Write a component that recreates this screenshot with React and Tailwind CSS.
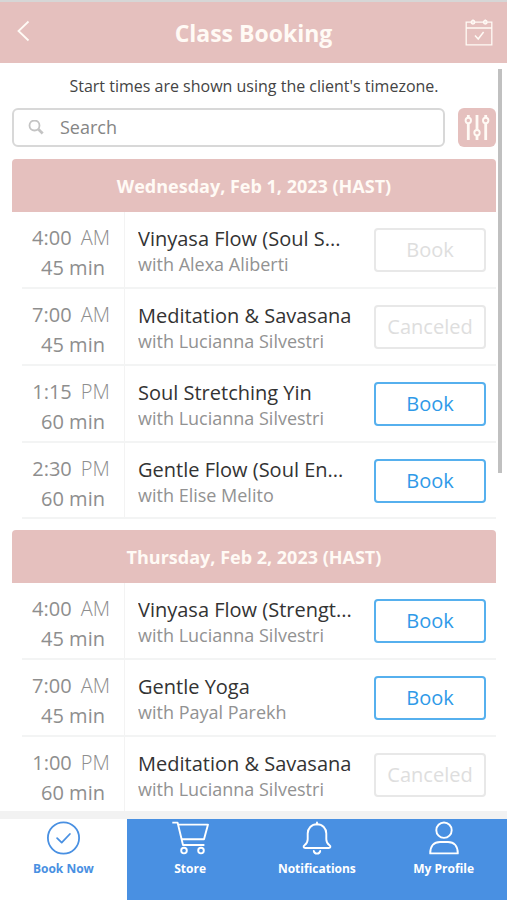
const days = [
  {
    label: 'Wednesday, Feb 1, 2023 (HAST)',
    classes: [
      { time: '4:00', half: 'AM', length: '45 min', title: 'Vinyasa Flow (Soul S...', teacher: 'Alexa Aliberti', action: 'Book', disabled: true },
      { time: '7:00', half: 'AM', length: '45 min', title: 'Meditation & Savasana', teacher: 'Lucianna Silvestri', action: 'Canceled', disabled: true },
      { time: '1:15', half: 'PM', length: '60 min', title: 'Soul Stretching Yin', teacher: 'Lucianna Silvestri', action: 'Book' },
      { time: '2:30', half: 'PM', length: '60 min', title: 'Gentle Flow (Soul En...', teacher: 'Elise Melito', action: 'Book' },
    ],
  },
  {
    label: 'Thursday, Feb 2, 2023 (HAST)',
    classes: [
      { time: '4:00', half: 'AM', length: '45 min', title: 'Vinyasa Flow (Strengt...', teacher: 'Lucianna Silvestri', action: 'Book' },
      { time: '7:00', half: 'AM', length: '45 min', title: 'Gentle Yoga', teacher: 'Payal Parekh', action: 'Book' },
      { time: '1:00', half: 'PM', length: '60 min', title: 'Meditation & Savasana', teacher: 'Lucianna Silvestri', action: 'Canceled', disabled: true },
    ],
  },
];

function BackIcon() {
  return (
    <svg className="h-6 w-4" viewBox="0 0 16 24" fill="none" stroke="currentColor" strokeWidth="1.8" aria-hidden="true">
      <path d="M12.5 2.5 2.5 12l10 9.5" />
    </svg>
  );
}

function CalendarIcon() {
  return (
    <svg className="h-7 w-7" viewBox="0 0 28 28" fill="none" stroke="currentColor" strokeWidth="1.3" aria-hidden="true">
      <path d="M6.2 3.2H1.2v22.6h25.6V3.2h-4.6M9.8 3.2h8.6M1.2 9h25.6" />
      <circle cx="8" cy="3.2" r="1.8" fill="currentColor" fillOpacity="0.7" />
      <circle cx="20.3" cy="3.2" r="1.8" fill="currentColor" fillOpacity="0.7" />
      <path d="M8 0.4v1.2M20.3 0.4v1.2" />
      <path d="m10 16.6 3.2 3.4 5.4-7" strokeWidth="1.5" />
    </svg>
  );
}

function SearchIcon() {
  return (
    <svg className="h-4 w-4" viewBox="0 0 16 16" fill="none" stroke="currentColor" aria-hidden="true">
      <circle cx="6.5" cy="5.5" r="5" strokeWidth="1.8" />
      <path d="m10.3 9.3 4.4 4.2" strokeWidth="2.8" />
    </svg>
  );
}

function SlidersIcon() {
  return (
    <svg className="h-7 w-7" viewBox="0 0 28 28" fill="none" stroke="currentColor" aria-hidden="true">
      <path d="M5.3 1v2.6M5.3 9.4V26M14 1v14.8M14 21.6V26M22.7 1v2.6M22.7 9.4V26" strokeWidth="2.8" />
      <circle cx="5.3" cy="6.5" r="2.7" strokeWidth="1.9" />
      <circle cx="14" cy="18.7" r="2.7" strokeWidth="1.9" />
      <circle cx="22.7" cy="6.5" r="2.7" strokeWidth="1.9" />
    </svg>
  );
}

function CheckCircleIcon() {
  return (
    <svg className="h-9 w-10" viewBox="0 0 40 36" fill="none" stroke="currentColor" strokeWidth="1.8" strokeLinecap="round" strokeLinejoin="round" aria-hidden="true">
      <circle cx="20.5" cy="19" r="15.6" />
      <path d="m14.1 19.2 4.6 4.4 8.2-8.6" />
    </svg>
  );
}

function CartIcon() {
  return (
    <svg className="h-9 w-10" viewBox="0 0 40 36" fill="none" stroke="currentColor" strokeWidth="1.9" strokeLinejoin="round" aria-hidden="true">
      <path d="M2.3 3.6H7.6L13 26H34.4" />
      <path d="M8.2 5.6H38L34 20.2H11.8" />
      <circle cx="14" cy="31.6" r="2.8" />
      <circle cx="31" cy="31.6" r="2.8" />
    </svg>
  );
}

function BellIcon() {
  return (
    <svg className="h-9 w-10" viewBox="0 -1 40 36" fill="none" stroke="currentColor" strokeWidth="1.9" strokeLinecap="round" strokeLinejoin="round" aria-hidden="true">
      <path d="M20 2.4v2" />
      <path d="M20 4.3c-5.6 0-9.3 4-9.3 9.3v5.6c0 2.8-1.2 4.6-3.2 6-1.5 1.1-1 2.8.8 2.8h23.4c1.8 0 2.3-1.7.8-2.8-2-1.4-3.2-3.2-3.2-6v-5.6c0-5.3-3.7-9.3-9.3-9.3Z" />
      <path d="M16.8 31c.3 1.7 1.6 2.6 3.2 2.6s2.9-.9 3.2-2.6" />
    </svg>
  );
}

function ProfileIcon() {
  return (
    <svg className="h-9 w-10" viewBox="0 -1 40 36" fill="none" stroke="currentColor" strokeWidth="1.9" strokeLinejoin="round" aria-hidden="true">
      <circle cx="20" cy="10.2" r="7.7" />
      <path d="M6.2 33.4C6.2 26 10 22 16 22h8c6 0 9.8 4 9.8 11.4Z" />
    </svg>
  );
}

const tabs = [
  { label: 'Book Now', Icon: CheckCircleIcon, active: true },
  { label: 'Store', Icon: CartIcon },
  { label: 'Notifications', Icon: BellIcon },
  { label: 'My Profile', Icon: ProfileIcon },
];

function ClassRow({ item }) {
  return (
    <li className="flex h-[77px] pl-[10px] last:h-[76px]">
      <div className="flex min-w-0 flex-1 border-b-2 border-[#f3f4f4]">
        <div className="flex w-[103px] shrink-0 flex-col items-center border-r border-[#f3f3f3] pt-[11px] text-xl leading-[30px] text-[#8e8e8e]">
          <p className="mr-1 flex gap-[9px]">
            <span>{item.time}</span>
            <span className="font-light">{item.half}</span>
          </p>
          <p>{item.length}</p>
        </div>
        <div className="min-w-0 flex-1 pt-[13px] pl-[13px]">
          <h3 className="truncate text-xl leading-[28px] text-[#333]">{item.title}</h3>
          <p className="truncate text-lg leading-[22px] text-[#929292]">with {item.teacher}</p>
        </div>
        <div className="shrink-0 pt-4 pr-[10px]">
          <button
            type="button"
            disabled={item.disabled}
            className="h-[44px] w-[112px] rounded border-2 border-[#56b0ee] text-xl text-[#2f9ae8] disabled:border-[#e8e8e8] disabled:text-[#dedede]"
          >
            {item.action}
          </button>
        </div>
      </div>
    </li>
  );
}

export default function App() {
  return (
    <div className="flex h-screen flex-col overflow-hidden bg-white font-['Open_Sans',sans-serif]">
      <header className="flex h-[63px] shrink-0 items-center justify-between border-t-2 border-[#d6d6d6] bg-[#e5c0be] px-[14px] text-[#fffaf5]">
        <button type="button" aria-label="Back" className="w-7 pb-1 pl-[2px]">
          <BackIcon />
        </button>
        <h1 className="text-[23px] leading-8 font-bold">Class Booking</h1>
        <button type="button" aria-label="My schedule">
          <CalendarIcon />
        </button>
      </header>

      <main className="relative min-h-0 flex-1 overflow-hidden pr-[11px] pl-3">
        <p className="pt-[11px] text-center text-base leading-6 text-[#444]">
          Start times are shown using the client's timezone.
        </p>
        <div className="mt-[10px] flex gap-[13px]">
          <label className="flex h-[39px] min-w-0 flex-1 items-center rounded-md border-2 border-[#d8d8d8] px-[14px] text-[#c4c4c4]">
            <SearchIcon />
            <input
              type="text"
              aria-label="Search"
              placeholder="Search"
              className="ml-4 h-8 min-w-0 flex-1 pb-[2px] text-lg text-[#444] outline-none placeholder:text-[#858585]"
            />
          </label>
          <button type="button" aria-label="Filters" className="flex h-[39px] w-[38px] items-center justify-center rounded-md bg-[#e5c0be] text-[#fffaf5]">
            <SlidersIcon />
          </button>
        </div>

        <div className="flex flex-col gap-[11px] pt-3">
          {days.map((day) => (
            <section key={day.label}>
              <h2 className="flex h-[53px] items-center justify-center rounded-t bg-[#e5c0be] text-lg font-bold text-[#fffaf5]">
                {day.label}
              </h2>
              <ul>
                {day.classes.map((item) => (
                  <ClassRow key={item.time + item.title} item={item} />
                ))}
              </ul>
            </section>
          ))}
        </div>

        <div className="absolute top-[6px] right-[5px] h-[404px] w-1 bg-[#c0c0c0]" aria-hidden="true" />
      </main>

      <nav className="grid h-[89px] shrink-0 grid-cols-4 border-t-8 border-[#f2f2f2] bg-[#4990e2]">
        {tabs.map(({ label, Icon, active }) => (
          <a
            key={label}
            href="#"
            aria-current={active ? 'page' : undefined}
            className="flex flex-col items-center text-xs leading-5 font-bold text-white aria-[current=page]:bg-white aria-[current=page]:text-[#4990e2]"
          >
            <Icon />
            <span className="mt-1">{label}</span>
          </a>
        ))}
      </nav>
    </div>
  );
}
